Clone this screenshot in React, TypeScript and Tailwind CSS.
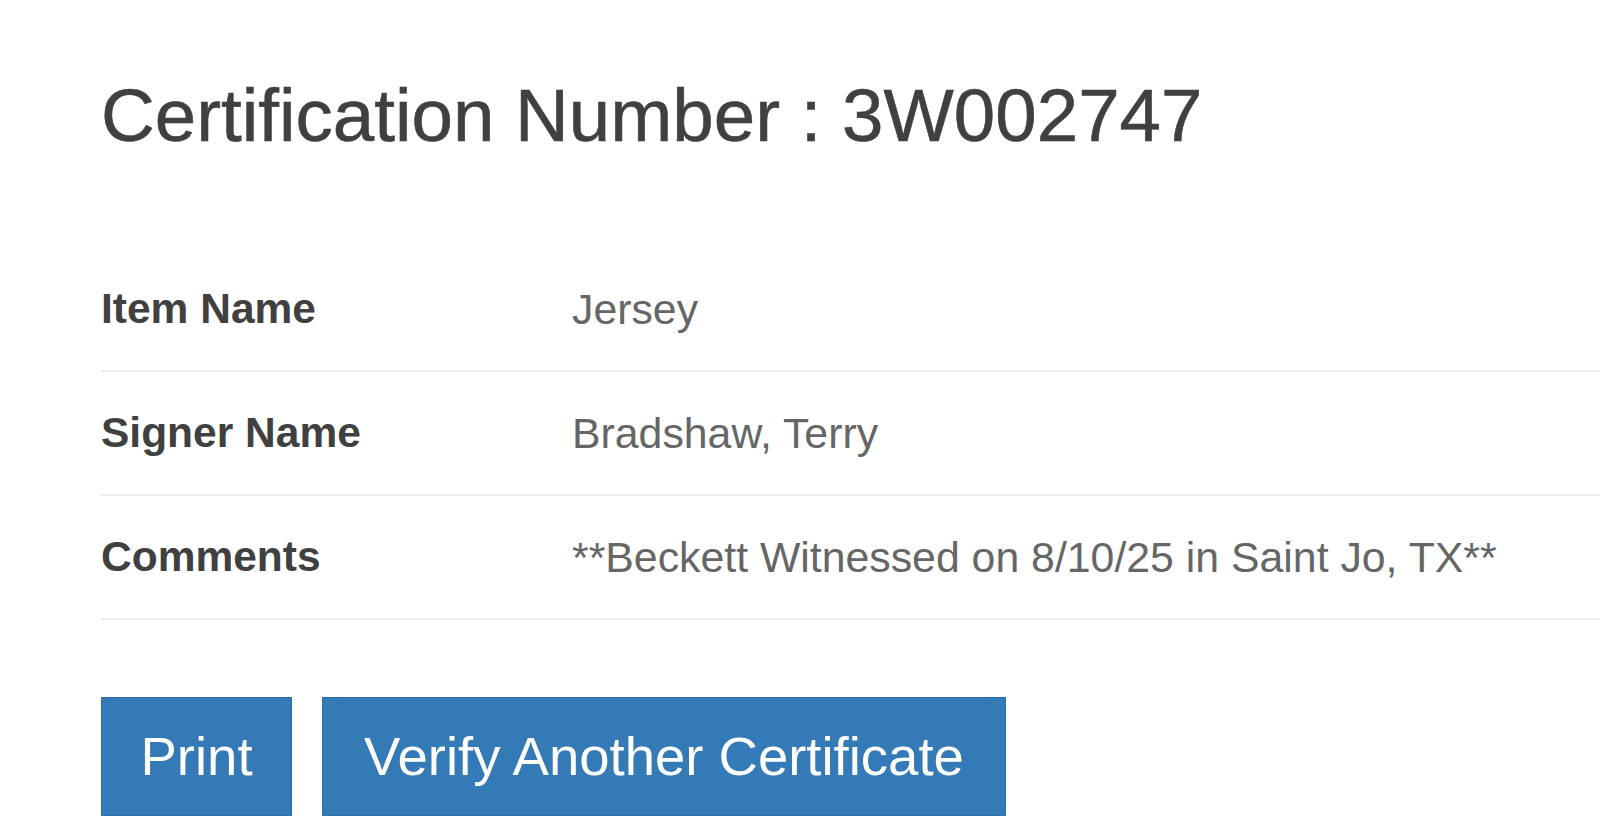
const rows = [
  { label: "Item Name", value: "Jersey" },
  { label: "Signer Name", value: "Bradshaw, Terry" },
  { label: "Comments", value: "**Beckett Witnessed on 8/10/25 in Saint Jo, TX**" },
]

export default function App() {
  return (
    <div className="min-h-screen bg-white pl-[101px] pt-[76px] font-['Liberation_Sans',Arial,sans-serif] overflow-hidden">
      <h1 className="text-[74.5px] leading-[80px] font-normal text-[#404040] whitespace-nowrap [-webkit-text-stroke:0.6px_#404040]">
        Certification Number : 3W002747
      </h1>

      <div className="mt-[92px] flex flex-col">
        {rows.map(row => (
          <div
            key={row.label}
            className="flex items-center h-[124px] border-b-2 border-[#eeeeee]"
          >
            <div className="w-[471px] shrink-0 text-[42.5px] leading-[48px] font-bold text-[#404040]">
              {row.label}
            </div>
            <div className="text-[42.8px] leading-[48px] text-[#666666] whitespace-nowrap">
              {row.value}
            </div>
          </div>
        ))}
      </div>

      <div className="mt-[77px] flex gap-[30px]">
        <button className="w-[191px] h-[119px] flex items-center justify-center bg-[#337ab7] border border-[#2e6da4] text-white text-[54.5px] leading-normal">
          Print
        </button>
        <button className="w-[684px] h-[119px] flex items-center justify-center bg-[#337ab7] border border-[#2e6da4] text-white text-[54.5px] leading-normal">
          Verify Another Certificate
        </button>
      </div>
    </div>
  )
}
